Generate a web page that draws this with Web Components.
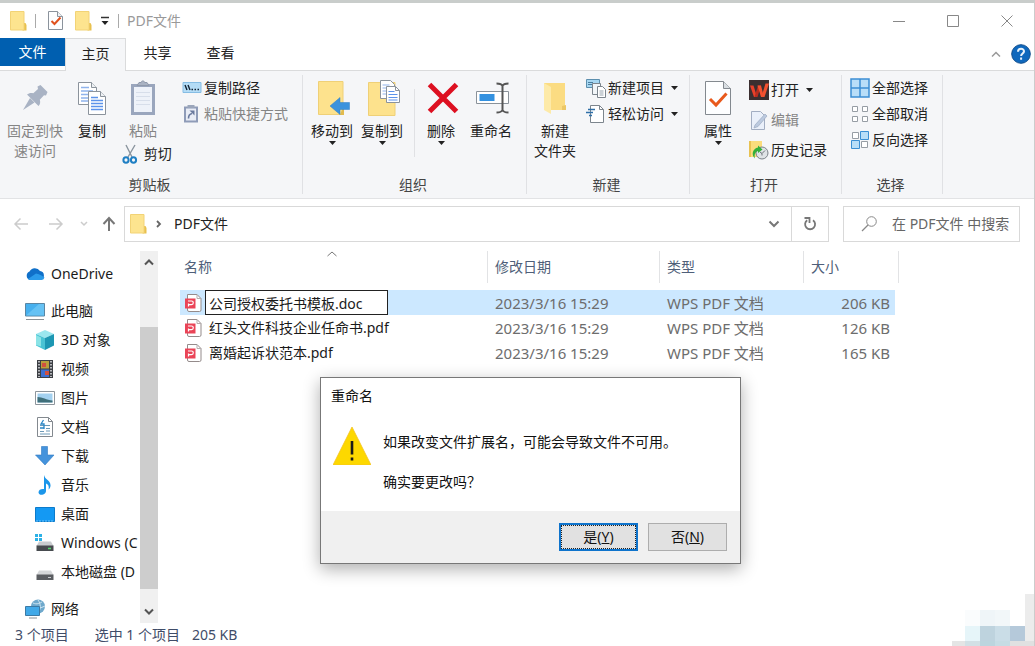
<!DOCTYPE html>
<html lang="zh-CN">
<head>
<meta charset="utf-8">
<title>PDF文件</title>
<style>
  body { margin: 0; font: 14px/20px "Noto Sans", "Noto Sans CJK SC", sans-serif; color: #222; background: #fff; }
</style>
</head>
<body>
<explorer-window></explorer-window>

<script>
const define = (name, html, setup) => {
  const template = document.createElement('template');
  template.innerHTML = `<style>
    *, *::before { box-sizing: border-box; }
    button, input { font: inherit; color: inherit; margin: 0; padding: 0; border: 0; background: none; outline: none; }
    button { display: block; }
  </style>` + html;
  customElements.define(name, class extends HTMLElement {
    constructor() {
      super();
      this.attachShadow({ mode: 'open' }).append(template.content.cloneNode(true));
    }
    connectedCallback() { if (setup) setup(this, this.shadowRoot); }
  });
};

/* name: [width, height, markup] */
const page = '<path d="M.5 .5h9l5 5v13h-14z" fill="#fdfeff" stroke="#8b939c"/><path d="M9.5 .5v5h5" fill="#eef1f4" stroke="#8b939c"/>';
const icons = {
  folder: [17, 20, '<path d="M0 1h14v13l2 0v5H0z" fill="#fbe08a"/><path d="M14 12h1.500l1 2v5.500h-4v-1.500h1.500z" fill="#e9c14f"/><path d="M.5 .5h13.500v18.500H.5z" fill="#fde48f" stroke="#f2d376"/>'],
  check: [15, 19, page + '<path d="M3.500 10l3 3 6-6.500" fill="none" stroke="#e0521e" stroke-width="2"/>'],
  qat: [10, 10, '<path d="M1 1.500h8" stroke="#333" stroke-width="1.500"/><path d="M1.500 5h7L5 9z" fill="#222"/>'],
  min: [12, 12, '<path d="M0 6.500h12" stroke="#888"/>'],
  max: [12, 12, '<path d="M.5 .5h11v11h-11z" fill="none" stroke="#888"/>'],
  close: [12, 12, '<path d="M.5 .5l11 11M11.500 .5l-11 11" stroke="#888" fill="none"/>'],
  up: [10, 8, '<path d="M1 6.500l4-4 4 4" stroke="#999" stroke-width="1.500" fill="none"/>'],
  help: [20, 20, '<circle cx="10" cy="10" r="9.300" fill="#0f68bd" stroke="#14508e"/><path d="M7 7.800c0-4 6.200-3.800 6-.4-.1 2-2.900 2.200-2.900 4.600M10.100 13.600v2.200" stroke="#e8f2fb" stroke-width="2" fill="none"/>'],
  pin: [28, 28, '<g fill="#a9b3c4"><path d="M16.500 2.500l3-1.500 7 7-1.500 3.500-2-.3-4.200 4.500c.8 2.500.4 4.500-1.300 6.300L6 10.500c2-1.600 4-2 6.300-1.200L17 5z"/><path d="M9 14l4.500 4.500L2 26z"/></g>'],
  copy: [30, 34, '<path d="M1.500 1.500h13l5 5v17h-18z" fill="#fff" stroke="#8b939c"/><path d="M14.500 1.500v5h5" fill="#eef1f4" stroke="#8b939c"/><path d="M4 6.500h8M4 10h12M4 13.500h7M4 17h7M4 20h7" stroke="#8fb3ec" stroke-width="1.500"/><path d="M11.500 10.500h12l5 5v18h-17z" fill="#fff" stroke="#8b939c"/><path d="M23.500 10.500v5h5" fill="#eef1f4" stroke="#8b939c"/><path d="M14 16.500h7M14 19.500h12M14 22.500h12M14 25.500h12M14 28.500h12" stroke="#5c93ea" stroke-width="1.500"/>'],
  paste: [26, 36, '<path d="M1 4h24v31H1z" fill="#9aa6bd"/><path d="M4 7h18v25H4z" fill="#eef2f9"/><path d="M7 5.500h12l-2-3h-2.500a1.600 1.600 0 0 0-3.200 0H9z" fill="#a9b2c2" stroke="#8f99ab"/><path d="M6 12.500h14M6 16.500h14M6 20.500h14M6 24.500h14" stroke="#d7deea"/>'],
  cut: [16, 20, '<path d="M4 1l6 12M13 1L6 13" stroke="#8a949e" stroke-width="1.400" fill="none"/><ellipse cx="4" cy="16" rx="2.600" ry="2.800" fill="none" stroke="#1f7fc4" stroke-width="2"/><ellipse cx="11.500" cy="16" rx="2.600" ry="2.800" fill="none" stroke="#1f7fc4" stroke-width="2"/>'],
  path: [20, 20, '<path d="M1 4.500h18v10H1z" fill="#b4dcf6" stroke="#86bde4"/><path d="M3 7l2 5M6 7l2 5" stroke="#123" stroke-width="1.400"/><path d="M9.500 11.500h1.500M12.500 11.500h1.500M15.500 11.500h1.500" stroke="#123" stroke-width="1.400"/>'],
  shortcut: [20, 20, '<path d="M2 2.500h14v16H2z" fill="#8f9cb8"/><path d="M4 4.500h10v12H4z" fill="#e9edf6"/><path d="M5.500 1h7v3h-7z" fill="#9ba6bb"/><path d="M6.500 14.500c0-3 1-4.500 3.500-5" fill="none" stroke="#6a7a9e" stroke-width="1.600"/><path d="M7.500 6.500h5v5z" fill="#6a7a9e"/>'],
  moveto: [32, 34, '<path d="M.5 .5H25v33H.5z" fill="#fde28d" stroke="#efd077"/><path d="M25 26h1v8h-4z" fill="#e2bb4e"/><path d="M12 25l10-8.500v5h9.500v7H22v5z" fill="#3b93dd" stroke="#2f7fc4" stroke-width=".5"/>'],
  copyto: [32, 36, '<path d="M.5 2.500H27v33H.5z" fill="#fde28d" stroke="#efd077"/><path d="M12.500 .5h10l4 4v14h-14z" fill="#fff" stroke="#8b939c"/><path d="M14.500 5h7M14.500 8h4M14.500 11h4M14.500 14h4" stroke="#8fb3ec"/><path d="M18.500 6.500h9l4 4v12h-13z" fill="#fff" stroke="#8b939c"/><path d="M27.500 6.500v4h4" fill="none" stroke="#8b939c"/><path d="M20.500 11.500h6M20.500 14.500h9M20.500 17.500h9M20.500 20h9" stroke="#5c93ea"/>'],
  del: [32, 32, '<path d="M2.500 2.500l27 27M29.500 2.500l-27 27" stroke="#dd1021" stroke-width="5"/>'],
  rename: [34, 34, '<path d="M.5 10.500h32v12H.5z" fill="#fff" stroke="#8a929a"/><path d="M3.500 13h15v7h-15z" fill="#3391e0"/><path d="M20.500 2.500c3 0 5 0 6 2.500 1-2.500 3-2.500 6-2.500M20.500 31.500c3 0 5 0 6-2.500 1 2.500 3 2.500 6 2.500M26.500 4v26" fill="none" stroke="#555" stroke-width="2"/>'],
  newfolder: [22, 32, '<path d="M0 1h21v27H0z" fill="#fbdc82"/><path d="M0 1l7 4v27l-7-4z" fill="#fdeaa8"/><path d="M18 24l4-1v5h-4z" fill="#ecc765"/>'],
  newitem: [20, 20, '<path d="M.5 1.500h13v8H.5z" fill="#a7d7f2" stroke="#5c8fae"/><path d="M2 6.500h4M2 4.500h5" stroke="#4a7ea0"/><path d="M6.500 5.500h8v11h-8z" fill="#f2f6f9" stroke="#7c858d"/><path d="M11.500 8.500h5l3 3v8h-8z" fill="#fff" stroke="#7c858d"/><path d="M13.500 13h4M13.500 15h4M13.500 17h4" stroke="#98a4ae"/>'],
  easy: [20, 20, '<path d="M4.500 1.500h9l4 4v13h-13z" fill="#fff" stroke="#7c858d"/><path d="M13.500 1.500v4h4" fill="none" stroke="#7c858d"/><path d="M2 5.500h7M0 8.500h7M3 11.500h3" stroke="#2e6fa8" stroke-width="1.500"/>'],
  props: [26, 34, '<path d="M.5 .5h18l7 7v26H.5z" fill="#fdfeff" stroke="#83898f"/><path d="M18.500 .5v7h7" fill="#d9dee2" stroke="#83898f"/><path d="M5 18l6 6L21.500 12.500" fill="none" stroke="#e8591c" stroke-width="3"/>'],
  wps: [20, 20, '<path d="M0 0h20v20H0z" fill="#3b2f30"/><path d="M1 5.500h3.500L8 17H5z" fill="#e8402a"/><path d="M5.500 17h3L12 5.500H9z" fill="#b92c1f"/><path d="M8.500 5.500H12L15 17h-3z" fill="#f4512f"/><path d="M12.500 17h3L20 3.500h-3.500z" fill="#f4512f"/>'],
  edit: [20, 20, '<path d="M2.500 1.500h9l4 4v14h-13z" fill="#eaf0fa" stroke="#a3aec2"/><path d="M6 15L16 4l2 2L9 16.500l-4 1.500z" fill="#bccadf" stroke="#9caac2" stroke-width=".7"/>'],
  history: [20, 20, '<path d="M0 1h13v16H0z" fill="#fbdd7c"/><path d="M0 1h2v16H0z" fill="#e8c252"/><circle cx="13" cy="13" r="6" fill="#dfe3e6" stroke="#7b8288"/><path d="M16 10.500l-3 3-2-1.500M13 13.500v2" stroke="#6b7278" fill="none"/><path d="M6 18.500C2 15 3.500 8.500 9 7.500V5.500l4.500 4-4.500 3.500v-2c-3 1-4 4-3 7.500z" fill="#34b03b"/>'],
  all: [20, 20, '<path d="M1 1h18v18H1z" fill="#b9def8" stroke="#3c8fd4" stroke-width="1.500"/><path d="M10 1v18M1 10h18" stroke="#3c8fd4" stroke-width="1.500"/>'],
  none: [20, 20, '<path d="M2.500 2.500h5v5h-5zM12.500 2.500h5v5h-5zM2.500 12.500h5v5h-5zM12.500 12.500h5v5h-5z" fill="#fff" stroke="#969da4"/>'],
  invert: [20, 20, '<path d="M2.500 2.500h6v6h-6zM11.500 11.500h6v6h-6z" fill="#fff" stroke="#969da4"/><path d="M10.500 1.500h8v8h-8zM1.500 10.500h8v8h-8z" fill="#b9def8" stroke="#3c8fd4"/>'],
  back: [16, 14, '<path d="M15 7H2M7.500 1.500L2 7l5.500 5.500" stroke="#ccc" stroke-width="1.500" fill="none"/>'],
  forward: [16, 14, '<path d="M1 7h13M8.500 1.500L14 7l-5.500 5.500" stroke="#ccc" stroke-width="1.500" fill="none"/>'],
  tiny: [8, 6, '<path d="M1 1l3 3 3-3" stroke="#ccc" stroke-width="1.500" fill="none"/>'],
  parent: [14, 16, '<path d="M7 15V2M1.500 8L7 2l5.500 6" stroke="#777" stroke-width="2" fill="none"/>'],
  right: [6, 8, '<path d="M1 1l3 3-3 3" stroke="#666" stroke-width="1.800" fill="none"/>'],
  down: [12, 8, '<path d="M1.500 1.500L6 6l4.500-4.500" stroke="#777" stroke-width="2" fill="none"/>'],
  refresh: [14, 14, '<path d="M10 3.200A5 5 0 1 1 4.200 3.200" fill="none" stroke="#777" stroke-width="1.800"/><path d="M1.500 1h5v5" fill="none" stroke="#777" stroke-width="1.800"/>'],
  search: [17, 16, '<circle cx="10.500" cy="5.500" r="4.800" fill="none" stroke="#888"/><path d="M7 9L1 15" stroke="#888" stroke-width="1.200"/>'],
  cloud: [20, 20, '<path d="M5 16a4.500 4.500 0 0 1-.5-8.500A6 6 0 0 1 15 7a4.600 4.600 0 0 1 .5 9z" fill="#1070c9"/><path d="M3 15l8-5.500c4 1 6.500 2.500 8.500 4a3.500 3.500 0 0 1-3.500 2.500H5z" fill="#2b9bea"/>'],
  pc: [20, 20, '<path d="M.5 2.500h19v12.500H.5z" fill="#47b0ee" stroke="#5a86a3"/><path d="M1 14.500L14 3h5v11.500z" fill="#74caf6" opacity=".7"/><path d="M1 18.500h18" stroke="#8b9297"/>'],
  cube: [20, 20, '<path d="M10 0l9 4-9 4-9-4z" fill="#9be7ef"/><path d="M1 4l9 4v12l-9-4.500z" fill="#49c3d4"/><path d="M19 4l-9 4v12l9-4.500z" fill="#1d97b3"/><path d="M1 5l5 2.500v9L1 15z" fill="#8ae3e6"/>'],
  video: [20, 20, '<path d="M2 1h16v18H2z" fill="#3c3f44"/><path d="M6 2h8v7.500H6z" fill="#b8a03c"/><path d="M6 10.500h8V18H6z" fill="#3e6fd0"/><path d="M7 4h4v4H7zM10 12h4v4h-4z" fill="#d1503e"/><path d="M4 2v16M16 2v16" stroke="#dfe1e3" stroke-width="1.500" stroke-dasharray="1.500 1.500"/>'],
  picture: [20, 20, '<path d="M.5 3.500h19v13H.5z" fill="#fff" stroke="#8d959c"/><path d="M2.500 5.500h15v9h-15z" fill="#a3d1f0"/><path d="M2.500 9c5 0 9 3 15 3.500v2h-15z" fill="#3f6f7a"/>'],
  document: [20, 20, '<path d="M2.500 .5h11l4 4v15h-15z" fill="#fff" stroke="#83898f"/><path d="M13.500 .5v4h4" fill="none" stroke="#83898f"/><path d="M5 8.500h10M5 14.500h4M5 17h10M11 11.500h4M11 14h4" stroke="#6c9ab8"/><path d="M8.500 3L6 7h3v5M5 11h4" stroke="#2a86c6" stroke-width="1.300" fill="none"/>'],
  download: [20, 20, '<path d="M6.500 .5h6V9H19l-9 10L.5 9h6z" fill="#4493dc" stroke="#2f7bc2" stroke-width=".6"/>'],
  music: [20, 20, '<path d="M9 0c1 5 7 5 6.500 11-.3 2-1 3-2 3.500 1-4-1-5.500-2.500-6V16c0 4-7 5.500-7.500 1.500C3.500 14.500 6.500 13.500 9 14z" fill="#1b96ea"/>'],
  desktop: [20, 20, '<path d="M.5 3.500h19v14H.5z" fill="#1499f3" stroke="#0c7bcb"/><path d="M1 17h18" stroke="#6cc3fa" stroke-dasharray="2 1"/>'],
  winDrive: [20, 20, '<path d="M0 1h3v3H0zM4 1h3v3H4zM0 5h3v3H0zM4 5h3v3H4z" fill="#2cb1e6"/><path d="M4 8.500h12l2.500 4.500H1.500z" fill="#c9cccf"/><path d="M1.500 12.500h17V18h-17z" fill="#474b4f"/><path d="M13 15.500h3" stroke="#54d96c" stroke-width="1.500"/>'],
  drive: [20, 20, '<path d="M4 8.500h12l2.500 4.500H1.500z" fill="#d5d7d9"/><path d="M1.500 12.500h17V18h-17z" fill="#5a5d61"/><path d="M13 15.500h3" stroke="#c9ccd0"/>'],
  network: [20, 20, '<circle cx="13" cy="7.500" r="7" fill="#6fa9cc"/><path d="M8 4c4 2 7 0 9-1M7 9c5 1 9 0 13-2M13 1c3 4 3 9 0 13" stroke="#cfe5f2" fill="none"/><path d="M.5 7.500h14v9H.5z" fill="#41a9e8" stroke="#3c7aa5"/><path d="M4 19h8" stroke="#8b9297"/>'],
  pdf: [18, 20, '<path d="M3.500 1.500h9.500l4 4V17a1.500 1.500 0 0 1-1.500 1.500H5A1.500 1.500 0 0 1 3.500 17z" fill="#fff" stroke="#948b8b"/><path d="M13 1.500v4h4" fill="none" stroke="#b5adad"/><path d="M1 5.500h10.500v10H1z" fill="#ea4457"/><path d="M4.500 13.500V10.500M4 8h3.500a1.800 1.800 0 0 1 0 3.600H4.500" fill="none" stroke="#fff" stroke-width="1.200"/>'],
  warn: [38, 38, '<path d="M19 0l19 38H0z" fill="#fdd800"/><path d="M19 0l19 38H0z" fill="none" stroke="#f4c321" stroke-width=".8"/><path d="M19 14v13.500M19 30.500v3" stroke="#1a1a1a" stroke-width="2.600"/>'],
  sort: [12, 6, '<path d="M1.500 5L6 1l4.500 4" stroke="#777" fill="none"/>'],
  scrollUp: [10, 8, '<path d="M1 6.500l4-4 4 4" stroke="#555" stroke-width="2" fill="none"/>'],
  scrollDown: [10, 8, '<path d="M1 1.500l4 4 4-4" stroke="#555" stroke-width="2" fill="none"/>'],
  caret: [7, 4, '<path d="M0 0h7L3.500 4z" fill="#222"/>']
};

define('ui-icon', `<style>:host { display: inline-flex; flex: none; } svg { display: block; }</style>`, (el, root) => {
  const [w, h, body] = icons[el.getAttribute('name')];
  root.innerHTML += `<svg width="${w}" height="${h}" viewBox="0 0 ${w} ${h}" aria-hidden="true">${body}</svg>`;
});

define('title-bar', `<style>
  :host { display: flex; align-items: center; height: 35px; padding-left: 10px; box-sizing: border-box; }
  .quick { display: flex; align-items: center; gap: 8px; flex: 1; color: #999; }
  .quick button { display: flex; }
  i { width: 1px; height: 14px; background: #aaa; }
  .controls { display: flex; }
  .controls button { width: 54px; height: 35px; display: grid; place-items: center; }
  .gap { margin-left: 4px; }
</style>
<div class="quick">
  <ui-icon name="folder"></ui-icon><i></i>
  <button class="gap" aria-label="属性"><ui-icon name="check"></ui-icon></button>
  <button class="gap" aria-label="新建文件夹"><ui-icon name="folder"></ui-icon></button>
  <button aria-label="自定义快速访问工具栏"><ui-icon name="qat"></ui-icon></button><i></i>
  <span>PDF文件</span>
</div>
<div class="controls">
  <button aria-label="最小化"><ui-icon name="min"></ui-icon></button>
  <button aria-label="最大化"><ui-icon name="max"></ui-icon></button>
  <button aria-label="关闭"><ui-icon name="close"></ui-icon></button>
</div>`);

define('ribbon-tabs', `<style>
  :host { display: flex; height: 33px; border-bottom: 1px solid #dadbdc; padding-right: 3px; box-sizing: border-box; }
  button { width: 63px; height: 30px; }
  .file { width: 65px; height: 28px; background: #005fb0; color: #fff; }
  .active { width: 61px; height: 33px; padding-bottom: 3px; background: #f5f6f8; border: 1px solid #dadbdc; border-bottom: 0; }
  .tools { display: flex; align-items: center; gap: 10px; margin-left: auto; }
  .tools button { width: auto; height: auto; display: flex; }
</style>
<button class="file">文件</button><button class="active">主页</button><button>共享</button><button>查看</button>
<div class="tools"><button aria-label="折叠功能区"><ui-icon name="up"></ui-icon></button><button aria-label="帮助"><ui-icon name="help"></ui-icon></button></div>`);

define('ribbon-group', `<style>
  :host { display: flex; flex-direction: column; flex: none; padding: 4px 0 3px; box-sizing: border-box; background: linear-gradient(#e0e1e4, #e0e1e4) right / 1px calc(100% - 8px) no-repeat; }
  .body { display: flex; align-items: flex-start; flex: 1; }
  .label { text-align: center; color: #444; padding-right: 4px; }
</style><div class="body"><slot></slot></div><div class="label"></div>`, (el, root) => {
  root.querySelector('.label').textContent = el.getAttribute('label');
});

define('ribbon-button', `<style>
  :host { display: block; width: 50px; flex: none; }
  :host([disabled]) { color: #858585; }
  button { width: 100%; display: flex; flex-direction: column; align-items: center; white-space: nowrap; }
  .icon { height: 46px; display: grid; place-items: center; padding-left: var(--icon-inset, 0); }
  .caret { display: none; }
  :host([menu]) .caret { display: flex; }
</style><button><span class="icon"><slot name="icon"></slot></span><span><slot></slot></span><span class="caret"><ui-icon name="caret"></ui-icon></span></button>`);

define('ribbon-command', `<style>
  :host { display: block; }
  :host([disabled]) { color: #858585; }
  button { display: flex; align-items: center; gap: 2px; height: var(--row, 26px); white-space: nowrap; }
  .caret { display: none; margin-left: 5px; }
  :host([menu]) .caret { display: flex; }
</style><button><slot name="icon"></slot><span><slot></slot></span><span class="caret"><ui-icon name="caret"></ui-icon></span></button>`);

define('ribbon-bar', `<style>
  :host { display: flex; height: 128px; background: #f5f6f8; border-bottom: 1px solid #e2e3e5; overflow: hidden; box-sizing: border-box; }
  .divider { width: 1px; height: 68px; background: #e0e1e4; margin: 14px 1px 0 7px; }
  .g1 { width: 303px; } .g2 { width: 224px; } .g3 { width: 163px; } .g4 { width: 152px; } .g5 { width: 101px; }
  .pin { width: 70px; } .copy { width: 44px; margin-right: 8px; } .paste { width: 42px; }
  .col { width: 60px; }
  .g2 { --icon-inset: 4px; }
  .g2 > :first-child { margin-left: 4px; }
  .g3 > :first-child, .g4 > :first-child { margin-left: 3px; }
  .g3 .list, .g4 .list { margin-left: 6px; }
  .g4 .list { --row: 30px; }
  .g5 .list { margin-left: 8px; }
</style>
<ribbon-group class="g1" label="剪贴板">
  <ribbon-button class="pin" disabled><ui-icon slot="icon" name="pin"></ui-icon>固定到快<br>速访问</ribbon-button>
  <ribbon-button class="copy"><ui-icon slot="icon" name="copy"></ui-icon>复制</ribbon-button>
  <div class="col">
    <ribbon-button class="paste" disabled><ui-icon slot="icon" name="paste"></ui-icon>粘贴</ribbon-button>
    <ribbon-command><ui-icon slot="icon" name="cut"></ui-icon>&nbsp;剪切</ribbon-command>
  </div>
  <div>
    <ribbon-command><ui-icon slot="icon" name="path"></ui-icon>复制路径</ribbon-command>
    <ribbon-command disabled><ui-icon slot="icon" name="shortcut"></ui-icon>粘贴快捷方式</ribbon-command>
  </div>
</ribbon-group>
<ribbon-group class="g2" label="组织">
  <ribbon-button menu><ui-icon slot="icon" name="moveto"></ui-icon>移动到</ribbon-button>
  <ribbon-button menu><ui-icon slot="icon" name="copyto"></ui-icon>复制到</ribbon-button>
  <div class="divider"></div>
  <ribbon-button menu><ui-icon slot="icon" name="del"></ui-icon>删除</ribbon-button>
  <ribbon-button><ui-icon slot="icon" name="rename"></ui-icon>重命名</ribbon-button>
</ribbon-group>
<ribbon-group class="g3" label="新建">
  <ribbon-button><ui-icon slot="icon" name="newfolder"></ui-icon>新建<br>文件夹</ribbon-button>
  <div class="list">
    <ribbon-command menu><ui-icon slot="icon" name="newitem"></ui-icon>新建项目</ribbon-command>
    <ribbon-command menu><ui-icon slot="icon" name="easy"></ui-icon>轻松访问</ribbon-command>
  </div>
</ribbon-group>
<ribbon-group class="g4" label="打开">
  <ribbon-button menu><ui-icon slot="icon" name="props"></ui-icon>属性</ribbon-button>
  <div class="list">
    <ribbon-command menu><ui-icon slot="icon" name="wps"></ui-icon>打开</ribbon-command>
    <ribbon-command disabled><ui-icon slot="icon" name="edit"></ui-icon>编辑</ribbon-command>
    <ribbon-command><ui-icon slot="icon" name="history"></ui-icon>历史记录</ribbon-command>
  </div>
</ribbon-group>
<ribbon-group class="g5" label="选择">
  <div class="list">
    <ribbon-command><ui-icon slot="icon" name="all"></ui-icon>全部选择</ribbon-command>
    <ribbon-command><ui-icon slot="icon" name="none"></ui-icon>全部取消</ribbon-command>
    <ribbon-command><ui-icon slot="icon" name="invert"></ui-icon>反向选择</ribbon-command>
  </div>
</ribbon-group>`);

define('address-bar', `<style>
  :host { display: flex; align-items: center; padding: 7px 14px 7px 4px; box-sizing: border-box; }
  button { height: 34px; display: grid; place-items: center; }
  .back { width: 34px; } .forward { width: 36px; } .recent { width: 20px; } .parent { width: 30px; }
  .path { flex: 1; display: flex; align-items: center; height: 36px; border: 1px solid #d9d9d9; padding-left: 5px; }
  .crumb { flex: 1; margin-left: 12px; }
  .chevron { margin-left: 9px; }
  .history { width: 34px; } .refresh { width: 37px; border-left: 1px solid #d9d9d9; }
  a { color: #222; text-decoration: none; }
  .search { display: flex; align-items: center; width: 177px; height: 36px; margin-left: 14px; border: 1px solid #d9d9d9; padding-left: 17px; gap: 14px; }
  input { flex: 1; min-width: 0; }
  input::placeholder { color: #666; opacity: 1; }
</style>
<button class="back" aria-label="后退"><ui-icon name="back"></ui-icon></button>
<button class="forward" aria-label="前进"><ui-icon name="forward"></ui-icon></button>
<button class="recent" aria-label="最近位置"><ui-icon name="tiny"></ui-icon></button>
<button class="parent" aria-label="上移"><ui-icon name="parent"></ui-icon></button>
<div class="path">
  <ui-icon name="folder"></ui-icon><ui-icon class="chevron" name="right"></ui-icon>
  <span class="crumb"><a href="#">PDF文件</a></span>
  <button class="history" aria-label="以前的位置"><ui-icon name="down"></ui-icon></button>
  <button class="refresh" aria-label="刷新"><ui-icon name="refresh"></ui-icon></button>
</div>
<label class="search"><ui-icon name="search"></ui-icon><input type="text" aria-label="搜索" placeholder="在 PDF文件 中搜索"></label>`);

define('nav-item', `<style>
  :host { display: block; }
  a { display: flex; align-items: center; gap: 6px; height: 29px; padding-left: 25px; color: #1a1a1a; text-decoration: none; white-space: nowrap; }
  :host([child]) a { padding-left: 35px; }
</style><a href="#"><slot name="icon"></slot><span><slot></slot></span></a>`);

define('nav-pane', `<style>
  :host { display: grid; grid-template-columns: 1fr 18px; padding-top: 2px; box-sizing: border-box; }
  nav { overflow: hidden; padding-top: 8px; display: flex; flex-direction: column; gap: 8px; }
  .bar { display: flex; flex-direction: column; background: #f0f0f0; }
  .bar button { width: 18px; height: 22px; display: grid; place-items: center; }
  .track { flex: 1; display: grid; grid-template-rows: 54fr 259fr 12fr; }
  .thumb { grid-row: 2; background: #cdcdcd; }
</style>
<nav>
  <nav-item><ui-icon slot="icon" name="cloud"></ui-icon>OneDrive</nav-item>
  <div>
    <nav-item><ui-icon slot="icon" name="pc"></ui-icon>此电脑</nav-item>
    <nav-item child><ui-icon slot="icon" name="cube"></ui-icon>3D 对象</nav-item>
    <nav-item child><ui-icon slot="icon" name="video"></ui-icon>视频</nav-item>
    <nav-item child><ui-icon slot="icon" name="picture"></ui-icon>图片</nav-item>
    <nav-item child><ui-icon slot="icon" name="document"></ui-icon>文档</nav-item>
    <nav-item child><ui-icon slot="icon" name="download"></ui-icon>下载</nav-item>
    <nav-item child><ui-icon slot="icon" name="music"></ui-icon>音乐</nav-item>
    <nav-item child><ui-icon slot="icon" name="desktop"></ui-icon>桌面</nav-item>
    <nav-item child><ui-icon slot="icon" name="winDrive"></ui-icon>Windows (C</nav-item>
    <nav-item child><ui-icon slot="icon" name="drive"></ui-icon>本地磁盘 (D</nav-item>
  </div>
  <nav-item><ui-icon slot="icon" name="network"></ui-icon>网络</nav-item>
</nav>
<div class="bar">
  <button aria-label="向上滚动"><ui-icon name="scrollUp"></ui-icon></button>
  <div class="track"><div class="thumb"></div></div>
  <button aria-label="向下滚动"><ui-icon name="scrollDown"></ui-icon></button>
</div>`);

define('file-list', `<style>
  :host { display: block; padding: 2px 0 0 22px; overflow: hidden; box-sizing: border-box; }
  table { width: 719px; table-layout: fixed; border-collapse: separate; border-spacing: 0; }
  .name { width: 308px; } .date { width: 172px; } .type { width: 144px; }
  th { position: relative; height: 32px; padding: 0 7px; text-align: left; font-weight: 400; color: #4f5f79; border-right: 1px solid #e2e3e5; }
  th:first-child { padding-left: 4px; }
  th ui-icon { position: absolute; left: 146px; top: 0; }
  tbody::before { content: ""; display: block; height: 7px; }
  td { height: 25px; padding: 0 7px; font-size: 15px; color: #6d6d6d; white-space: nowrap; }
  td:first-child { padding: 0 0 0 4px; font-size: 14px; color: #1a1a1a; }
  td:last-child { text-align: right; padding-right: 5px; border-right: 4px solid transparent; background-clip: padding-box; }
  .selected td { background-color: #cce8ff; }
  .file { display: flex; align-items: center; gap: 7px; }
  .selected .file { gap: 3px; }
  input { width: 183px; height: 25px; border: 1px solid #222; background: #fff; padding: 0 3px; }
</style>
<table>
  <thead><tr><th class="name">名称<ui-icon name="sort"></ui-icon></th><th class="date">修改日期</th><th class="type">类型</th><th>大小</th></tr></thead>
  <tbody>
    <tr class="selected"><td><div class="file"><ui-icon name="pdf"></ui-icon><input type="text" aria-label="文件名" value="公司授权委托书模板.doc"></div></td><td>2023/3/16 15:29</td><td>WPS PDF 文档</td><td>206 KB</td></tr>
    <tr><td><div class="file"><ui-icon name="pdf"></ui-icon>红头文件科技企业任命书.pdf</div></td><td>2023/3/16 15:29</td><td>WPS PDF 文档</td><td>126 KB</td></tr>
    <tr><td><div class="file"><ui-icon name="pdf"></ui-icon>离婚起诉状范本.pdf</div></td><td>2023/3/16 15:29</td><td>WPS PDF 文档</td><td>165 KB</td></tr>
  </tbody>
</table>`);

define('rename-dialog', `<style>
  :host { display: block; width: 421px; box-sizing: border-box; background: #fff; border: 1px solid #777; box-shadow: 0 5px 16px rgba(0,0,0,.32); color: #111; }
  h2 { margin: 0; padding: 8px 10px; font: inherit; }
  .message { display: flex; gap: 12px; padding: 13px 12px 19px; }
  .message p { margin: 0 0 20px; }
  .message p:last-child { margin: 0; }
  .text { padding-top: 5px; }
  footer { display: flex; justify-content: flex-end; gap: 10px; padding: 12px 13px; background: #f0f0f0; }
  footer button { width: 79px; height: 28px; background: #e1e1e1; border: 1px solid #adadad; }
  footer .default { border: 2px solid #0f74cc; outline: 1px dotted #222; outline-offset: -3px; }
</style>
<h2>重命名</h2>
<div class="message"><ui-icon name="warn"></ui-icon>
  <div class="text"><p>如果改变文件扩展名，可能会导致文件不可用。</p><p>确实要更改吗？</p></div></div>
<footer><button class="default">是(<u>Y</u>)</button><button>否(<u>N</u>)</button></footer>`);

define('status-bar', `<style>
  :host { display: flex; align-items: center; height: 26px; padding: 0 15px 2px; gap: 26px; color: #3f4c68; box-sizing: border-box; }
  .size { margin-left: 12px; }
</style><span>3 个项目</span><span>选中 1 个项目<span class="size">205 KB</span></span>`);

define('corner-mosaic', `<style>:host { display: block; } svg { display: block; }</style>
<svg width="83" height="55" viewBox="0 0 83 55" aria-hidden="true">
  <path d="M73 0h10v55H73z" fill="#ececec"/>
  <path d="M13 16h15v16H13z" fill="#fafcfd"/><path d="M28 16h15v16H28z" fill="#eff5f8"/><path d="M43 16h15v16H43z" fill="#f2f7f9"/>
  <path d="M13 32h15v15H13z" fill="#e6f5f9"/><path d="M28 32h15v15H28z" fill="#bed3de"/><path d="M43 32h15v15H43z" fill="#cadde7"/><path d="M58 32h15v15H58z" fill="#b5c9da"/>
  <path d="M0 47h13v8H0z" fill="#e4e5e5"/><path d="M13 47h15v8H13z" fill="#d2e0e5"/><path d="M28 47h15v8H28z" fill="#bcd5de"/><path d="M43 47h15v8H43z" fill="#c6dce4"/><path d="M58 47h25v8H58z" fill="#e0e1e1"/>
</svg>`);

define('explorer-window', `<style>
  :host { display: flex; flex-direction: column; position: relative; min-height: 100vh; border-top: 3px solid #c9cdcb; border-right: 1px solid #ccc; box-sizing: border-box; overflow: hidden; }
  main { flex: 1; display: grid; grid-template-columns: 158px 1fr; }
  rename-dialog { position: absolute; left: 320px; top: 374px; }
  corner-mosaic { position: absolute; right: -1px; bottom: 0; }
</style>
<title-bar></title-bar><ribbon-tabs></ribbon-tabs><ribbon-bar></ribbon-bar><address-bar></address-bar>
<main><nav-pane></nav-pane><file-list></file-list></main>
<status-bar></status-bar>
<rename-dialog role="dialog" aria-label="重命名"></rename-dialog>
<corner-mosaic></corner-mosaic>`);
</script>
</body>
</html>
